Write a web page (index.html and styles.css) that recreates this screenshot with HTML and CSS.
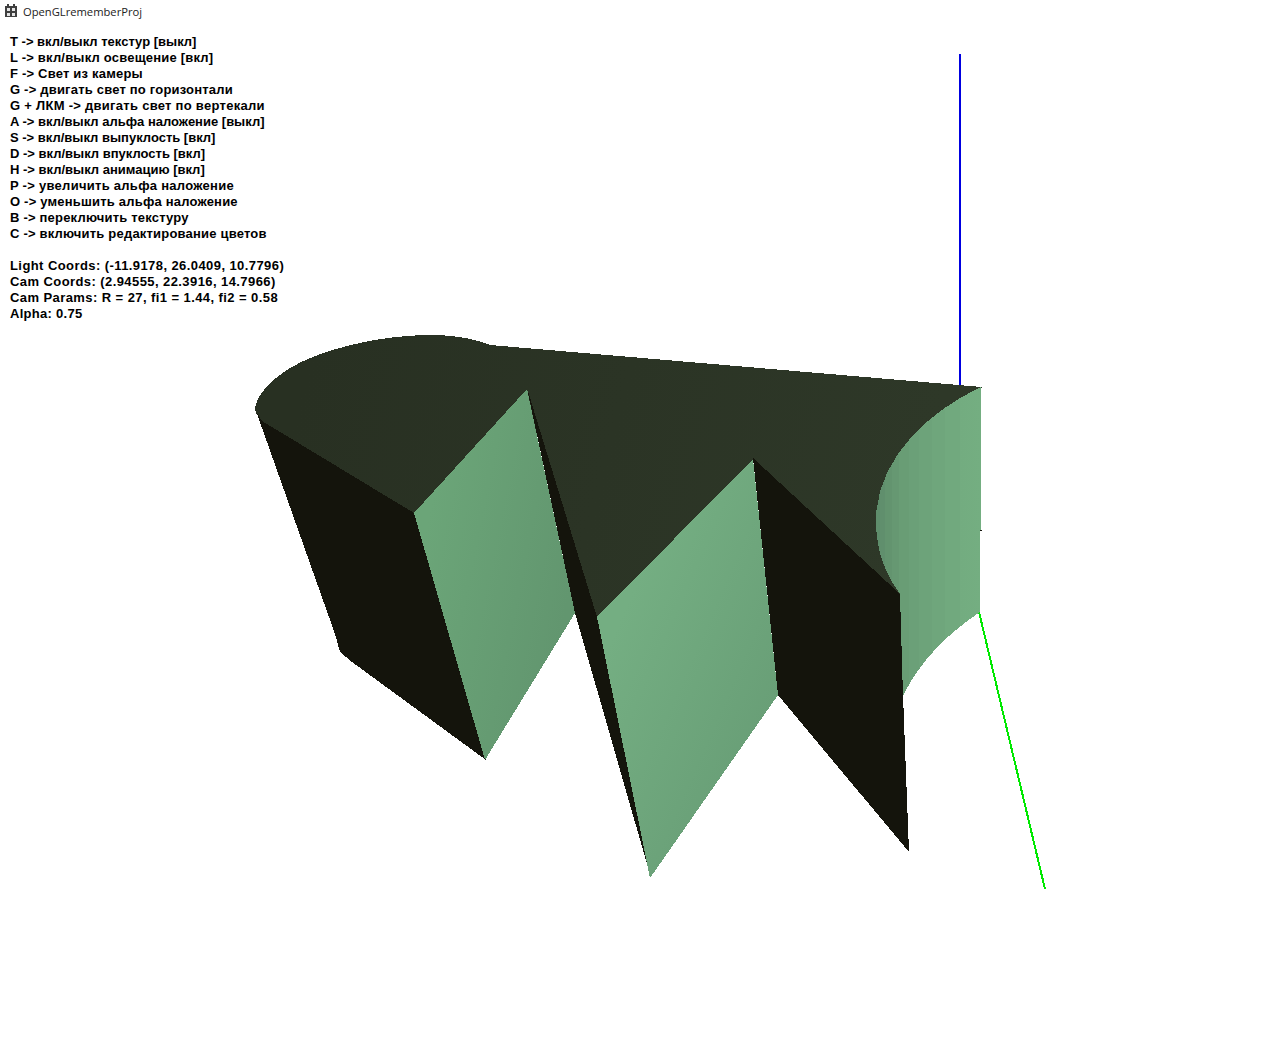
FILE: index.html
```html
<!DOCTYPE html>
<html lang="ru">
<head>
    <meta charset="UTF-8">
    <title>OpenGLrememberProj</title>
    <link rel="stylesheet" href="styles.css">
</head>
<body>
    <div class="titlebar">
        <svg class="app-icon" width="14" height="14" viewBox="0 0 14 14" shape-rendering="crispEdges">
            <path d="M3 0h2v2h4V0h2v2h2v11H1V2h2z" fill="#3f3f3f"/>
            <path d="M3 4h3v3H3zM8 4h3v3H8zM3 9h3v3H3zM8 9h3v3H8z" fill="#e4e4e4"/>
        </svg>
        <span class="app-title">OpenGLrememberProj</span>
    </div>

    <div class="viewport">
        <svg class="scene" width="1280" height="1018" viewBox="0 22 1280 1018" shape-rendering="crispEdges">
            <defs>
                <linearGradient id="greenLeft" gradientUnits="userSpaceOnUse" x1="420" y1="560" x2="570" y2="590">
                    <stop offset="0" stop-color="#6ba578"/>
                    <stop offset="1" stop-color="#62966f"/>
                </linearGradient>
                <linearGradient id="greenMid" gradientUnits="userSpaceOnUse" x1="620" y1="620" x2="780" y2="690">
                    <stop offset="0" stop-color="#74ae82"/>
                    <stop offset="1" stop-color="#699f77"/>
                </linearGradient>
                <!-- the curved face is flat shaded, so its strips show -->
                <linearGradient id="greenRight" gradientUnits="userSpaceOnUse" x1="876" y1="500" x2="981" y2="500">
                    <stop offset="0" stop-color="#5e8d6b"/>
                    <stop offset="0.04" stop-color="#5e8d6b"/>
                    <stop offset="0.04" stop-color="#608f6d"/>
                    <stop offset="0.09" stop-color="#608f6d"/>
                    <stop offset="0.09" stop-color="#63946f"/>
                    <stop offset="0.15" stop-color="#63946f"/>
                    <stop offset="0.15" stop-color="#669872"/>
                    <stop offset="0.22" stop-color="#669872"/>
                    <stop offset="0.22" stop-color="#699d75"/>
                    <stop offset="0.31" stop-color="#699d75"/>
                    <stop offset="0.31" stop-color="#6ba078"/>
                    <stop offset="0.41" stop-color="#6ba078"/>
                    <stop offset="0.41" stop-color="#6da37a"/>
                    <stop offset="0.53" stop-color="#6da37a"/>
                    <stop offset="0.53" stop-color="#6fa67c"/>
                    <stop offset="0.66" stop-color="#6fa67c"/>
                    <stop offset="0.66" stop-color="#71a97e"/>
                    <stop offset="0.8" stop-color="#71a97e"/>
                    <stop offset="0.8" stop-color="#73ac80"/>
                    <stop offset="1" stop-color="#74ae81"/>
                </linearGradient>
                <linearGradient id="darkTop" gradientUnits="userSpaceOnUse" x1="300" y1="400" x2="900" y2="560">
                    <stop offset="0" stop-color="#283022"/>
                    <stop offset="1" stop-color="#2e3828"/>
                </linearGradient>
            </defs>

            <!-- axes -->
            <line x1="960" y1="54" x2="960" y2="388" stroke="#0000e0" stroke-width="2"/>
            <line x1="979" y1="612" x2="1045" y2="889" stroke="#00e800" stroke-width="2"/>

            <!-- top face, runs a little under the side faces so no seam shows -->
            <path fill="url(#darkTop)" d="M255 408 C257 396 268 382 290 368 C320 350 380 334 436 335 C462 336 477 340 490 345 L982 387 L950 480 L900 598 L753 462 L596 622 L524 392 L417 516 L262 421 C257 416 255 412 255 408 Z"/>

            <!-- dark side faces -->
            <path fill="#14140c" d="M256 411 L262 421 L414 513 L486 760 L352 662 L340 652 L335 634 Z"/>
            <path fill="#14140c" d="M527 388 L597 617 L651 878 L575 613 Z"/>
            <path fill="#14140c" d="M753 458 L900 594 L903 695 L909 852 L778 695 Z"/>

            <!-- lit faces -->
            <path fill="url(#greenLeft)" d="M414 513 L527 389 L575 613 L485 760 Z"/>
            <path fill="url(#greenMid)" d="M597 617 L753 459 L778 695 L650 878 Z"/>
            <path fill="url(#greenRight)" d="M981 387 C925 413 876 462 876 520 C876 552 886 575 900 594 L903 696 C920 660 950 632 980 612 L980 530 L981 530 Z"/>
            <rect x="980" y="530" width="2" height="1" fill="#14140c"/>
        </svg>

        <div class="hud">
            <div class="hud-line ls-tight">T -&gt; вкл/выкл текстур [выкл]</div>
            <div class="hud-line ls-mid">L -&gt; вкл/выкл освещение [вкл]</div>
            <div class="hud-line ls-mid">F -&gt; Свет из камеры</div>
            <div class="hud-line ls-mid">G -&gt; двигать свет по горизонтали</div>
            <div class="hud-line ls-wide">G + ЛКМ -&gt; двигать свет по вертекали</div>
            <div class="hud-line ls-tight">A -&gt; вкл/выкл альфа наложение [выкл]</div>
            <div class="hud-line ls-tight">S -&gt; вкл/выкл выпуклость [вкл]</div>
            <div class="hud-line ls-tight">D -&gt; вкл/выкл впуклость [вкл]</div>
            <div class="hud-line ls-tight">H -&gt; вкл/выкл анимацию [вкл]</div>
            <div class="hud-line ls-wide">P -&gt; увеличить альфа наложение</div>
            <div class="hud-line ls-mid">O -&gt; уменьшить альфа наложение</div>
            <div class="hud-line ls-mid">B -&gt; переключить текстуру</div>
            <div class="hud-line ls-mid">C -&gt; включить редактирование цветов</div>
            <div class="hud-line">&nbsp;</div>
            <div class="hud-line ls-num">Light Coords: (-11.9178, 26.0409, 10.7796)</div>
            <div class="hud-line ls-num">Cam Coords: (2.94555, 22.3916, 14.7966)</div>
            <div class="hud-line ls-num">Cam Params: R = 27, fi1 = 1.44, fi2 = 0.58</div>
            <div class="hud-line ls-wide">Alpha: 0.75</div>
        </div>
    </div>
</body>
</html>
```

FILE: styles.css
```css
html, body {
    margin: 0;
    padding: 0;
    background: #ffffff;
    overflow: hidden;
}

body {
    width: 1280px;
    height: 1040px;
    font-family: "Liberation Sans", Arial, sans-serif;
    color: #000000;
}

.titlebar {
    display: flex;
    align-items: center;
    gap: 5px;
    height: 22px;
    padding-left: 4px;
    box-sizing: border-box;
}

.app-icon {
    flex: none;
}

.app-title {
    font-family: "Open Sans", sans-serif;
    font-size: 11.2px;
    color: #222222;
}

.viewport {
    position: relative;
    height: 1018px;
}

.scene {
    display: block;
}

.hud {
    position: absolute;
    left: 10px;
    top: 12px;
    font-size: 13px;
    font-weight: bold;
    line-height: 16px;
    white-space: nowrap;
}

.ls-tight {
    letter-spacing: 0;
}

.ls-mid {
    letter-spacing: 0.2px;
}

.ls-wide {
    letter-spacing: 0.28px;
}

.ls-num {
    letter-spacing: 0.42px;
}
```
